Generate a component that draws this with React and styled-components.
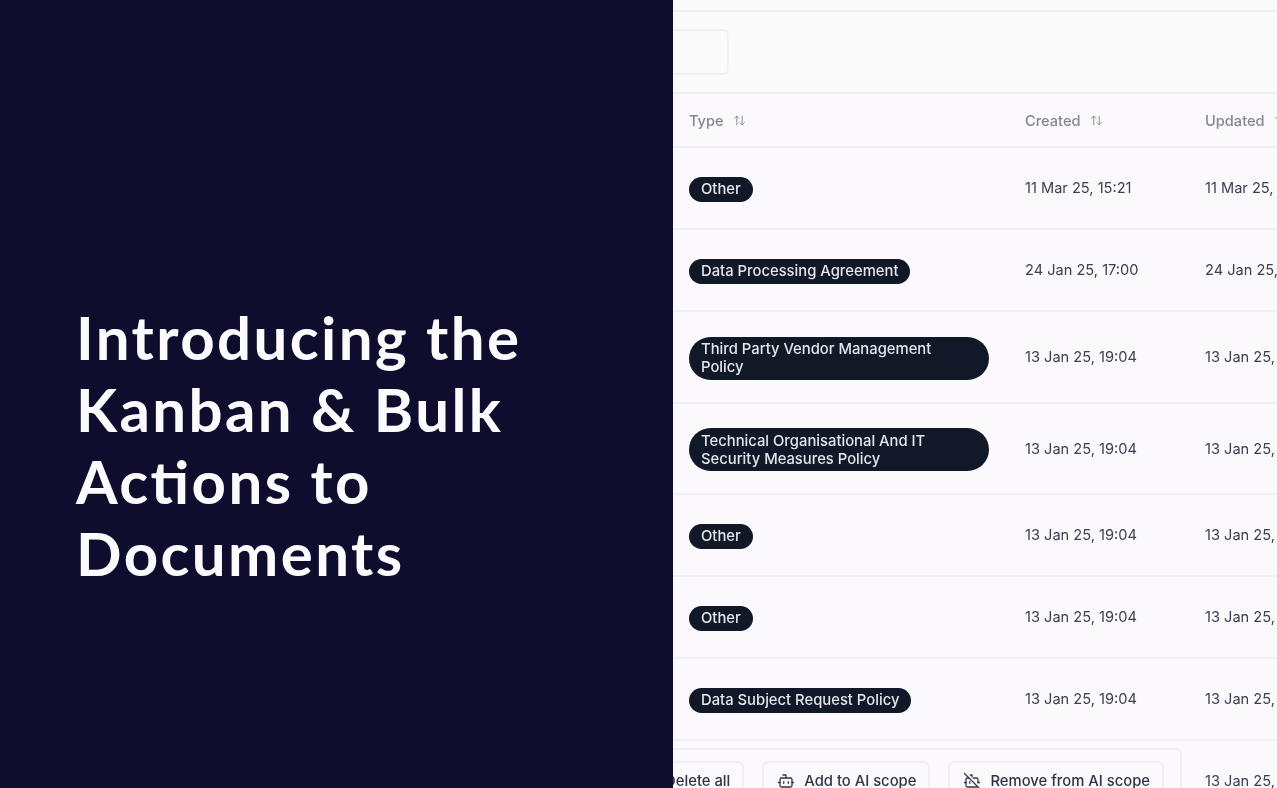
import React from "react";
import styled, { createGlobalStyle } from "styled-components";
import { ArrowUpDown, Bot, BotOff } from "lucide-react";

const GlobalStyle = createGlobalStyle`
  html, body {
    margin: 0;
    height: 100%;
    overflow: hidden;
    background: #fbf9fb;
  }
`;

const Page = styled.div`
  width: 1277px;
  height: 788px;
  display: flex;
  overflow: hidden;
`;

const Hero = styled.div`
  width: 673px;
  flex: none;
  background: #0f0d2d;
  display: flex;
  align-items: center;
  padding: 102px 0 0 76px;
  box-sizing: border-box;
`;

const Heading = styled.h1`
  margin: 0;
  width: 500px;
  font-family: Lato, sans-serif;
  font-size: 60px;
  font-weight: 700;
  line-height: 72px;
  letter-spacing: 2.4px;
  font-feature-settings: "liga" 1;
  color: #fbfafd;
`;

const Shot = styled.div`
  position: relative;
  flex: 1;
  overflow: hidden;
  background: #fbf9fb;
  font-family: Inter, sans-serif;
  filter: blur(0.4px);
`;

const TopBar = styled.div`
  height: 12px;
  box-sizing: border-box;
  border-bottom: 2px solid #f0f0f2;
  background: #fafafb;
`;

const Toolbar = styled.div`
  height: 82px;
  border-bottom: 2px solid #f0f0f2;
  padding-top: 17px;
  box-sizing: border-box;
  background: #fafafb;
`;

const FilterBox = styled.div`
  width: 56px;
  height: 46px;
  box-sizing: border-box;
  border: 2px solid #f0f0f2;
  border-left: 0;
  border-radius: 0 6px 6px 0;
`;

const Row = styled.div`
  height: ${(props) => props.$height}px;
  box-sizing: border-box;
  display: grid;
  grid-template-columns: 336px 180px 1fr;
  align-items: center;
  border-bottom: 2px solid #f0f0f2;
`;

const HeadCell = styled.div`
  display: flex;
  align-items: center;
  padding: 1px 0 0 16px;
  gap: 9px;
  font-size: 14.6px;
  font-weight: 500;
  color: #808896;
  white-space: nowrap;
`;

const Cell = styled.div`
  padding-left: 16px;
  font-size: 14.6px;
  color: #3b4150;
  white-space: nowrap;
`;

const TypeCell = styled.div`
  padding: 0 20px 0 16px;
  display: flex;
`;

const Pill = styled.span`
  margin-top: 2px;
  background: #111827;
  color: #e5e6ea;
  font-size: 14.8px;
  font-weight: 500;
  line-height: 18px;
  border-radius: 999px;
  padding: 3.5px 12px;
  box-sizing: border-box;
  ${(props) => props.$wide && "width: 300px; border-radius: 22px; padding-right: 26px;"}
`;

const BulkBar = styled.div`
  position: absolute;
  left: -40px;
  top: 748px;
  width: 549px;
  height: 60px;
  box-sizing: border-box;
  background: #fbf9fb;
  border: 2px solid #f0f0f2;
  border-radius: 6px;
  padding: 11px 16px 0 0;
  display: flex;
  justify-content: flex-end;
  gap: 18px;
`;

const BulkButton = styled.div`
  height: 45px;
  box-sizing: border-box;
  padding: 9px 12px 0 13px;
  border: 2px solid #f0f0f2;
  border-radius: 6px;
  display: flex;
  align-items: flex-start;
  gap: 9px;
  font-size: 14.8px;
  font-weight: 500;
  color: #2f3544;
  white-space: nowrap;
`;

const rows = [
  { type: "Other", created: "11 Mar 25, 15:21", height: 82 },
  { type: "Data Processing Agreement", created: "24 Jan 25, 17:00", height: 82 },
  { type: "Third Party Vendor Management Policy", created: "13 Jan 25, 19:04", height: 92, wide: true },
  { type: "Technical Organisational And IT Security Measures Policy", created: "13 Jan 25, 19:04", height: 91, wide: true },
  { type: "Other", created: "13 Jan 25, 19:04", height: 82 },
  { type: "Other", created: "13 Jan 25, 19:04", height: 82 },
  { type: "Data Subject Request Policy", created: "13 Jan 25, 19:04", height: 82 },
];

function App() {
  return (
    <Page>
      <GlobalStyle />
      <Hero>
        <Heading>Introducing the Kanban &amp; Bulk Actions to Documents</Heading>
      </Hero>
      <Shot>
        <TopBar />
        <Toolbar>
          <FilterBox />
        </Toolbar>
        <Row $height={54}>
          <HeadCell>
            Type <ArrowUpDown size={13} strokeWidth={1.7} />
          </HeadCell>
          <HeadCell>
            Created <ArrowUpDown size={13} strokeWidth={1.7} />
          </HeadCell>
          <HeadCell>
            Updated <ArrowUpDown size={13} strokeWidth={1.7} />
          </HeadCell>
        </Row>
        {rows.map((row, i) => (
          <Row key={i} $height={row.height}>
            <TypeCell>
              <Pill $wide={row.wide}>{row.type}</Pill>
            </TypeCell>
            <Cell>{row.created}</Cell>
            <Cell>{row.created}</Cell>
          </Row>
        ))}
        <Row $height={82}>
          <TypeCell />
          <Cell />
          <Cell>13 Jan 25, 19:04</Cell>
        </Row>
        <BulkBar>
          <BulkButton>Delete all</BulkButton>
          <BulkButton>
            <Bot size={18} strokeWidth={1.7} /> Add to AI scope
          </BulkButton>
          <BulkButton>
            <BotOff size={18} strokeWidth={1.7} /> Remove from AI scope
          </BulkButton>
        </BulkBar>
      </Shot>
    </Page>
  );
}

export default App;
